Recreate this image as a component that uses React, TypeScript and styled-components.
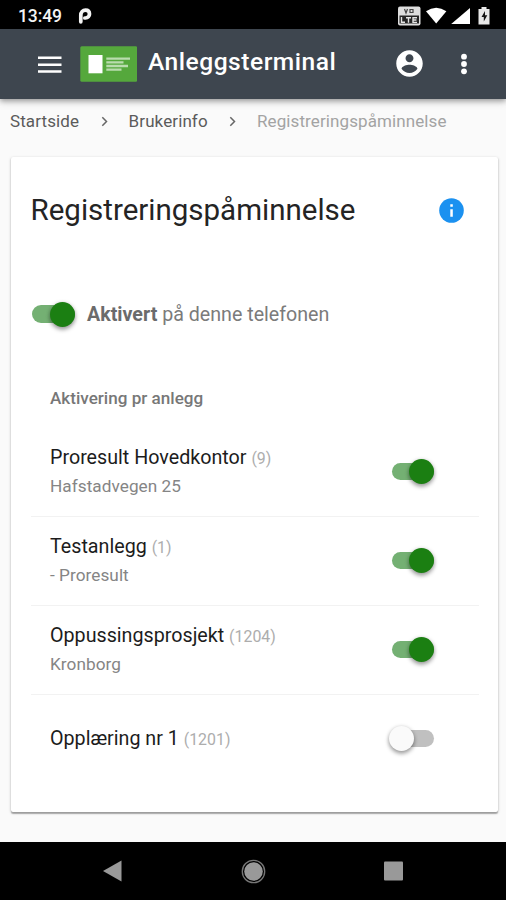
import React from "react";
import styled, { createGlobalStyle } from "styled-components";

const GlobalStyle = createGlobalStyle`
  * { box-sizing: border-box; }
  body { margin: 0; background: #fafafa; font-family: Roboto, "Liberation Sans", sans-serif; }
`;

const Screen = styled.div`
  width: 506px;
  height: 900px;
  display: flex;
  flex-direction: column;
  background: #fafafa;
  overflow: hidden;
`;

const StatusBar = styled.div`
  height: 29px;
  flex: none;
  background: #000;
  color: #f4f4f4;
  display: flex;
  align-items: center;
  padding: 2px 14px 0 18px;
`;

const Clock = styled.span`
  width: 60px;
  font-size: 17.5px;
  font-weight: 500;
  letter-spacing: -0.1px;
`;

const StatusIcons = styled.div`
  margin-left: auto;
  display: flex;
  align-items: center;
`;

const AppBar = styled.header`
  height: 69.5px;
  flex: none;
  display: flex;
  align-items: center;
  padding: 0 38px 0 38px;
  background: #3e464f;
  color: #fff;
  box-shadow: 0 2px 5px rgba(0, 0, 0, 0.32), 0 4px 8px rgba(0, 0, 0, 0.1);
`;

const AppTitle = styled.h1`
  margin: 0 auto 3px 11px;
  font-size: 24.6px;
  line-height: 30px;
  font-weight: 500;
  letter-spacing: 0.5px;
`;

const MoreIcon = styled.svg`
  margin-left: 37px;
`;

const Breadcrumbs = styled.nav`
  height: 58px;
  flex: none;
  display: flex;
  align-items: flex-start;
  padding: 11px 0 0 10px;
  font-size: 17px;
  line-height: 22px;
  letter-spacing: 0.1px;
  color: #5b5b5b;
`;

const Crumb = styled.span<{ $w?: number; $muted?: boolean }>`
  width: ${(p) => (p.$w ? `${p.$w}px` : "auto")};
  color: ${(p) => (p.$muted ? "#a3a3a3" : "inherit")};
`;

const Separator = styled.svg`
  margin: 6px 21px 0;
`;

const Card = styled.main`
  height: 655.5px;
  flex: none;
  margin: 0 8px 0 11px;
  padding: 0 19px 0 20px;
  background: #fff;
  border-radius: 2px;
  box-shadow: 0 1px 3px rgba(0, 0, 0, 0.26), 0 1.5px 1px rgba(0, 0, 0, 0.24);
`;

const CardHeader = styled.div`
  height: 107px;
  display: flex;
  align-items: center;
  justify-content: space-between;
  padding-right: 15px;
`;

const CardTitle = styled.h2`
  margin: 0 0 0 -0.5px;
  font-size: 29.5px;
  font-weight: 400;
  color: #242424;
`;

const MasterRow = styled.div`
  height: 101px;
  display: flex;
  align-items: center;
  gap: 12.5px;
  padding-left: 1px;
  font-size: 19.65px;
  color: #7b7b7b;

  b {
    font-weight: 700;
    color: #6b6b6b;
  }
`;

const Subheader = styled.div`
  height: 63px;
  padding: 23px 0 0 19px;
  font-size: 17.1px;
  line-height: 20px;
  font-weight: 500;
  color: #777;
`;

const SiteRow = styled.div`
  height: 89px;
  display: flex;
  align-items: center;
  justify-content: space-between;
  padding: 0 45px 0 19px;
  border-bottom: 1.5px solid #f2f2f2;

  &:last-child {
    border-bottom-color: transparent;
  }
`;

const SiteName = styled.div`
  padding-top: 1px;
  font-size: 19.7px;
  line-height: 28px;
  color: #1c1c1c;
`;

const Count = styled.span`
  font-size: 15.9px;
  color: #adadad;
`;

const SiteDetail = styled.div`
  font-size: 17.2px;
  line-height: 27px;
  letter-spacing: 0.05px;
  color: #858585;
`;

const Track = styled.span<{ $on: boolean }>`
  width: 42.5px;
  height: 17.5px;
  flex: none;
  display: flex;
  align-items: center;
  justify-content: ${(p) => (p.$on ? "flex-end" : "flex-start")};
  border-radius: 9px;
  background: ${(p) => (p.$on ? "#74b073" : "#c0c0c0")};
`;

const Thumb = styled.span<{ $on: boolean }>`
  width: 25px;
  height: 25px;
  flex: none;
  border-radius: 50%;
  margin-left: ${(p) => (p.$on ? "0" : "-3px")};
  background: ${(p) => (p.$on ? "#1b7f12" : "#fafafa")};
  box-shadow: 0 1px 4px rgba(0, 0, 0, 0.25), 0 3px 4px rgba(0, 0, 0, 0.25);
`;

const NavBar = styled.footer`
  height: 58px;
  flex: none;
  margin-top: auto;
  display: flex;
  align-items: center;
  justify-content: space-between;
  padding: 0 103px;
  background: #000;
`;

function Toggle({ on }: { on: boolean }) {
  return (
    <Track $on={on}>
      <Thumb $on={on} />
    </Track>
  );
}

function Chevron() {
  return (
    <Separator width="7" height="11" viewBox="0 0 7 11" fill="none" stroke="#666" strokeWidth="1.5">
      <path d="M1.3 1.2 5.5 5.5 1.3 9.8" />
    </Separator>
  );
}

const sites = [
  { name: "Proresult Hovedkontor", count: 9, detail: "Hafstadvegen 25", on: true },
  { name: "Testanlegg", count: 1, detail: "- Proresult", on: true },
  { name: "Oppussingsprosjekt", count: 1204, detail: "Kronborg", on: true },
  { name: "Opplæring nr 1", count: 1201, detail: "", on: false },
];

export default function App() {
  return (
    <>
      <GlobalStyle />
      <Screen>
        <StatusBar>
          <Clock>13:49</Clock>
          <svg width="14" height="16" viewBox="0 0 14 16">
            <path
              d="M2.8 13.8V7.4C2.8 4.2 4.9 2.2 7.5 2.2s4 1.6 4 3.8-1.6 4-4 4H6.8"
              fill="none"
              stroke="#f4f4f4"
              strokeWidth="3.7"
              strokeLinecap="round"
            />
          </svg>
          <StatusIcons>
            <svg width="74" height="20" viewBox="398 5 74 20">
              <rect x="398" y="5.5" width="22.5" height="19" rx="2" fill="#dedede" />
              <path d="M399.5 14.5h19.5v8h-19.5z" fill="#252525" />
              <path d="M401.5 16v5.2h3.5M406 16.7h5M408.5 16.7v5M417 16.7h-4v4.7h4M413 19h3.5" fill="none" stroke="#e5e5e5" strokeWidth="1.4" />
              <path d="M404.5 8l1.5 4 1.5-4M410 8.5h3v3h-3z" fill="none" stroke="#444" strokeWidth="1.2" />
              <path d="M426 10.3q10.2-7 20.4 0L436.2 22.5z" fill="#fff" />
              <path d="M470 7v16h-18.8z" fill="#fff" />
            </svg>
            <svg width="20" height="20" viewBox="472 5 20 20">
              <path d="M481.5 6h5v2h3v15.5h-11V8h3z" fill="#e8e8e8" />
              <path d="M485 10l-3.5 6h2.3v4.5l3.5-6.2H485z" fill="#151515" />
            </svg>
          </StatusIcons>
        </StatusBar>

        <AppBar>
          <svg width="99" height="36" viewBox="38 46 99 36">
            <path d="M38 57.8h23.5M38 64.7h23.5M38 71.4h23.5" stroke="#fff" strokeWidth="2.5" />
            <rect x="80.3" y="46.2" width="57" height="35.6" rx="1.5" fill="#55a83c" />
            <rect x="88.5" y="55" width="14" height="18.3" fill="#fff" />
            <path d="M106.3 58.7H130M106.3 62.3h17.2M106.3 66h21.7M106.3 69.7h15.2" stroke="#b9dcae" strokeWidth="2.3" />
          </svg>
          <AppTitle>Anleggsterminal</AppTitle>
          <svg width="27" height="27" viewBox="1.8 1.8 20.4 20.4" fill="#fff">
            <path d="M12 2C6.48 2 2 6.48 2 12s4.48 10 10 10 10-4.48 10-10S17.52 2 12 2zm0 3c1.66 0 3 1.34 3 3s-1.34 3-3 3-3-1.34-3-3 1.34-3 3-3zm0 14.2c-2.5 0-4.71-1.28-6-3.22.03-1.99 4-3.08 6-3.08 1.99 0 5.97 1.09 6 3.08-1.29 1.94-3.5 3.22-6 3.22z" />
          </svg>
          <MoreIcon width="8" height="24" viewBox="0 0 8 24" fill="#fff">
            <circle cx="4" cy="4.7" r="2.9" />
            <circle cx="4" cy="12" r="2.9" />
            <circle cx="4" cy="19.3" r="2.9" />
          </MoreIcon>
        </AppBar>

        <Breadcrumbs>
          <Crumb $w={69.6}>Startside</Crumb>
          <Chevron />
          <Crumb $w={79.4}>Brukerinfo</Crumb>
          <Chevron />
          <Crumb $muted>Registreringspåminnelse</Crumb>
        </Breadcrumbs>

        <Card>
          <CardHeader>
            <CardTitle>Registreringspåminnelse</CardTitle>
            <svg width="25" height="25" viewBox="0 0 25 25">
              <circle cx="12.5" cy="12.5" r="12.3" fill="#1b91f0" />
              <path d="M11.3 6.3h2.5v2.5h-2.5zM11.3 11.2h2.5v7.5h-2.5z" fill="#fff" />
            </svg>
          </CardHeader>
          <MasterRow>
            <Toggle on />
            <span>
              <b>Aktivert</b> på denne telefonen
            </span>
          </MasterRow>
          <Subheader>Aktivering pr anlegg</Subheader>
          <section>
            {sites.map((site) => (
              <SiteRow key={site.name}>
                <div>
                  <SiteName>
                    {site.name} <Count>({site.count})</Count>
                  </SiteName>
                  {site.detail && <SiteDetail>{site.detail}</SiteDetail>}
                </div>
                <Toggle on={site.on} />
              </SiteRow>
            ))}
          </section>
        </Card>

        <NavBar>
          <svg width="19" height="22" viewBox="0 0 19 22">
            <path d="M0 11 18.5 0.5v21z" fill="#999" />
          </svg>
          <svg width="25" height="25" viewBox="0 0 25 25">
            <circle cx="12.5" cy="12.5" r="11.2" fill="none" stroke="#777" strokeWidth="1.3" />
            <circle cx="12.5" cy="12.5" r="9.3" fill="#999" />
          </svg>
          <svg width="19" height="20" viewBox="0 0 19 20">
            <rect y="0.5" width="19" height="19" rx="1" fill="#999" />
          </svg>
        </NavBar>
      </Screen>
    </>
  );
}
